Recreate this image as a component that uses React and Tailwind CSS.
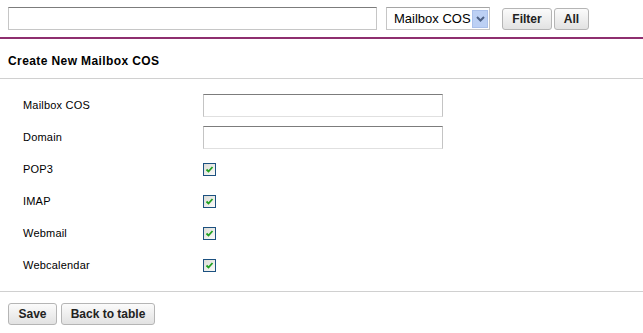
import { useState } from "react";

const fields = [
    { label: "Mailbox COS", type: "text" },
    { label: "Domain", type: "text" },
    { label: "POP3", type: "check" },
    { label: "IMAP", type: "check" },
    { label: "Webmail", type: "check" },
    { label: "Webcalendar", type: "check" },
];

function Check() {
    return (
        <span className="flex items-center justify-center w-[13px] h-[13px] border border-[#1c5180] bg-gradient-to-br from-[#dcdcd7] to-[#fbfbf9]">
            <svg width="9" height="9" viewBox="0 0 9 9">
                <path d="M1.5 4.5 L3.5 6.5 L7.5 2" stroke="#21a121" strokeWidth="1.8" fill="none" />
            </svg>
        </span>
    );
}

function Button({ children, className = "" }) {
    return (
        <button
            className={`h-[22px] rounded-[3px] border border-[#b5b5b5] bg-gradient-to-b from-[#fbfbfb] to-[#e2e2e2] text-[12px] font-bold text-[#222] ${className}`}
        >
            {children}
        </button>
    );
}

export default function App() {
    const [search, setSearch] = useState("");

    return (
        <div className="w-[643px] h-[333px] bg-white font-['Liberation_Sans',Arial,sans-serif] text-black overflow-hidden">
            {/* Filter bar */}
            <div className="flex items-center h-[37px] pl-2">
                <input
                    value={search}
                    onChange={(e) => setSearch(e.target.value)}
                    className="w-[369px] h-[23px] border border-[#c6c6c6] border-t-[#7c7c7c] outline-none"
                />
                <div className="ml-[9px] flex items-center justify-between w-[104px] h-[23px] border border-[#c6c6c6] border-t-[#a5a5a5] pl-[7px] pr-[1px] text-[13px]">
                    <span>Mailbox COS</span>
                    <span className="flex items-center justify-center w-[16px] h-[18px] bg-[#bcd0f4] border border-[#aac0ea]">
                        <svg width="9" height="6" viewBox="0 0 9 6">
                            <path d="M1 1 L4.5 4.5 L8 1" stroke="#4d6185" strokeWidth="2" fill="none" />
                        </svg>
                    </span>
                </div>
                <Button className="ml-[12px] w-[50px]">Filter</Button>
                <Button className="ml-[2px] w-[35px]">All</Button>
            </div>
            <div className="h-[2px] bg-[#8e2f6f]" />

            {/* Heading */}
            <div className="h-[39px] flex items-center pl-2 pt-[4px] text-[12px] font-bold tracking-[0.4px]">
                Create New Mailbox COS
            </div>
            <div className="h-px bg-[#d0d0d0]" />

            {/* Form rows */}
            <div className="pt-[10px] pb-[10px]">
                {fields.map((f) => (
                    <div key={f.label} className="flex items-center h-[32px] pl-[23px] text-[11px]">
                        <span className="w-[180px] tracking-[0.2px]">{f.label}</span>
                        {f.type === "text" ? (
                            <input className="w-[240px] h-[23px] border border-[#c4c4c4] border-t-[#7c7c7c] border-b-[#e0e0e0] outline-none" />
                        ) : (
                            <Check />
                        )}
                    </div>
                ))}
            </div>
            <div className="h-px bg-[#d0d0d0]" />

            {/* Actions */}
            <div className="flex items-center pl-2 pt-[11px] gap-[4px]">
                <Button className="w-[49px]">Save</Button>
                <Button className="w-[94px]">Back to table</Button>
            </div>
        </div>
    );
}
